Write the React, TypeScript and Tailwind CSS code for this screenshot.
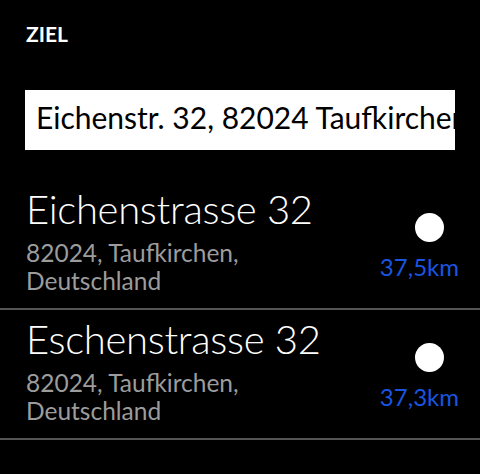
const places = [
  { title: 'Eichenstrasse 32', line1: '82024, Taufkirchen,', line2: 'Deutschland', km: '37,5km' },
  { title: 'Eschenstrasse 32', line1: '82024, Taufkirchen,', line2: 'Deutschland', km: '37,3km' },
];

export default function App() {
  return (
    <div className="w-[480px] h-[474px] overflow-hidden bg-black text-white font-['Lato','Open_Sans',sans-serif]">
      <div className="pl-[26px] pt-[22px] h-[90px] text-[21px] font-bold leading-[24px]">ZIEL</div>

      <div className="mx-[25px] h-[60px] pt-[12px] bg-white overflow-hidden">
        <div className="pl-[11px] text-[30px] leading-[30px] text-black whitespace-nowrap">
          Eichenstr. 32, 82024 Taufkirchen
        </div>
      </div>

      <div className="mt-[30px]">
        {places.map((p) => (
          <div key={p.title} className="h-[130px] border-b-2 border-[#555555] flex justify-between">
            <div className="pl-[26px] pt-[6px]">
              <div className="text-[40px] tracking-[-0.3px] font-light leading-[46px]">{p.title}</div>
              <div className="mt-[7px] text-[24.5px] leading-[28px] text-[#9c9c9c]">
                <div>{p.line1}</div>
                <div>{p.line2}</div>
              </div>
            </div>
            <div className="pr-[21px] pt-[33px] flex flex-col items-end">
              <div className="w-[29px] h-[29px] rounded-full bg-white mr-[15px]" />
              <div className="mt-[10px] text-[24px] leading-[29px] text-[#1a55e0]">{p.km}</div>
            </div>
          </div>
        ))}
      </div>
    </div>
  );
}
